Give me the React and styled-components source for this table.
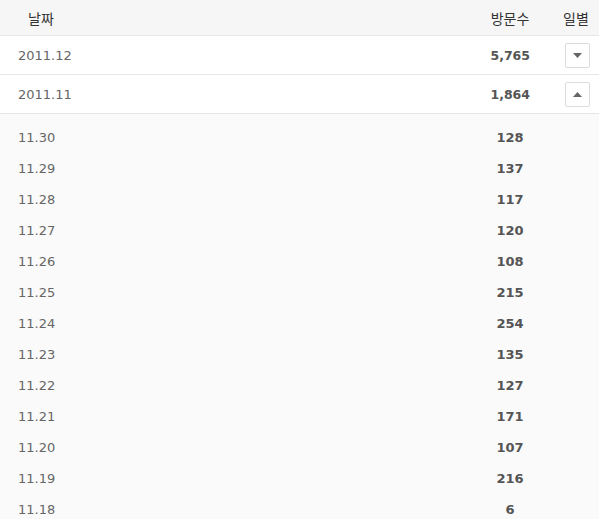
import React, { useState } from 'react'
import styled, { createGlobalStyle } from 'styled-components';

const GlobalStyle = createGlobalStyle`
  body {
    margin: 0;
    background: #fff;
    font-family: "DejaVu Sans", "Noto Sans CJK KR", sans-serif;
  }
`

const Table = styled.div`
  width: 599px;
  height: 519px;
  overflow: hidden;
  background: #fafafa;
`

const Row = styled.div`
  display: grid;
  grid-template-columns: 1fr 86px 46px;
  align-items: center;
`

const HeadRow = styled(Row)`
  height: 35px;
  background: #f6f6f6;
  border-bottom: 1px solid #e6e6e6;
  color: #333;
  font-size: 14px;
`

const HeadCell = styled.div`
  padding-left: ${(p) => (p.first ? '28px' : '0')};
  text-align: ${(p) => (p.first ? 'left' : 'center')};
`

const MonthRow = styled(Row)`
  height: 38px;
  background: #fff;
  border-bottom: 1px solid #e6e6e6;
`

const DateCell = styled.div`
  padding-left: 18px;
  color: #666;
  font-size: 13px;
`

const MonthCount = styled.div`
  text-align: right;
  padding-right: 23px;
  color: #555;
  font-weight: bold;
  font-size: 12.5px;
`

const Toggle = styled.button`
  justify-self: center;
  width: 25px;
  height: 25px;
  margin-left: 2px;
  padding: 0;
  border: 1px solid #dcdcdc;
  border-radius: 2px;
  background: #fff;
  display: flex;
  align-items: center;
  justify-content: center;
  cursor: pointer;
`

const Days = styled.div`
  padding-top: 8px;
`

const DayRow = styled(Row)`
  height: 31px;
`

const DayCount = styled.div`
  text-align: center;
  color: #555;
  font-weight: bold;
  font-size: 13px;
`

const Arrow = ({ up }) => (
  <svg width="9" height="5" viewBox="0 0 9 5">
    {up ? <path d="M0 5 L4.5 0 L9 5 Z" fill="#666" /> : <path d="M0 0 L9 0 L4.5 5 Z" fill="#666" />}
  </svg>
)

const months = [
  { label: '2011.12', count: '5,765' },
  { label: '2011.11', count: '1,864' },
]

const days = [
  ['11.30', 128], ['11.29', 137], ['11.28', 117], ['11.27', 120],
  ['11.26', 108], ['11.25', 215], ['11.24', 254], ['11.23', 135],
  ['11.22', 127], ['11.21', 171], ['11.20', 107], ['11.19', 216],
  ['11.18', 6],
]

const App = () => {
  const [open, setOpen] = useState('2011.11');
  return (
    <>
      <GlobalStyle />
      <Table>
        <HeadRow>
          <HeadCell first>날짜</HeadCell>
          <HeadCell>방문수</HeadCell>
          <HeadCell>일별</HeadCell>
        </HeadRow>
        {months.map((m) => (
          <React.Fragment key={m.label}>
            <MonthRow>
              <DateCell>{m.label}</DateCell>
              <MonthCount>{m.count}</MonthCount>
              <Toggle onClick={() => setOpen(open === m.label ? null : m.label)}>
                <Arrow up={open === m.label} />
              </Toggle>
            </MonthRow>
            {open === m.label && (
              <Days>
                {days.map(([d, c]) => (
                  <DayRow key={d}>
                    <DateCell>{d}</DateCell>
                    <DayCount>{c}</DayCount>
                  </DayRow>
                ))}
              </Days>
            )}
          </React.Fragment>
        ))}
      </Table>
    </>
  )
}

export default App;
